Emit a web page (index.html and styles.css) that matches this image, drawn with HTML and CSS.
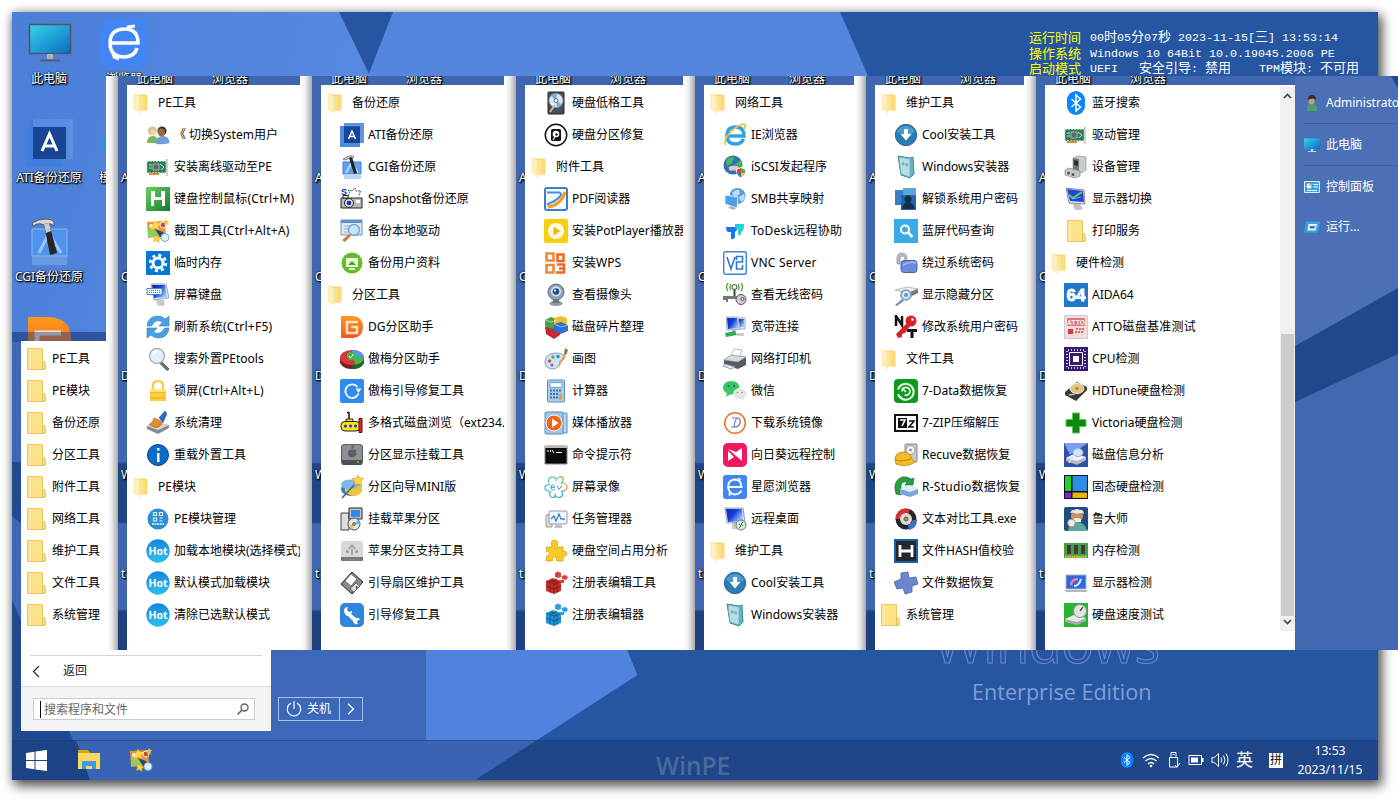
FILE: index.html
```html
<!DOCTYPE html>
<html lang="zh-CN">
<head>
<meta charset="utf-8">
<title>WinPE</title>
<link rel="stylesheet" href="styles.css">
</head>
<body>
<svg class="sprite" aria-hidden="true">
<defs>
<linearGradient id="gY" x2="1"><stop offset="0" stop-color="#ffe9a0"/><stop offset="1" stop-color="#fbd56b"/></linearGradient>
<linearGradient id="gC" x2="1" y2="1"><stop offset="0" stop-color="#35d5ea"/><stop offset="1" stop-color="#0a6cc4"/></linearGradient>
<linearGradient id="gH" y2="1" x2="0"><stop offset="0" stop-color="#1787dc"/><stop offset="1" stop-color="#2cc0ee"/></linearGradient>
<linearGradient id="gN" x2="1" y2=".6"><stop offset="0" stop-color="#1023a8"/><stop offset=".5" stop-color="#1c3fd8"/><stop offset="1" stop-color="#9cc6ff"/></linearGradient>
<linearGradient id="gO" x2="0" y2="1"><stop offset="0" stop-color="#fb9a1c"/><stop offset="1" stop-color="#f0581c"/></linearGradient>
<linearGradient id="gGr" x2="1" y2="1"><stop offset="0" stop-color="#6ccf5c"/><stop offset="1" stop-color="#157a35"/></linearGradient>
</defs>
<symbol id="folder" viewBox="0 0 24 24"><path d="M3.500 1.500H18.500V13.500l2.500 2V22.500H3.500z" fill="#fde28c" stroke="#ecca62"/><path d="M6 2v20" stroke="#fff0bc"/><path d="M18.500 22V14q2.300 1 2.500 3v5.500z" fill="#ffe9a8" stroke="#e3bc4e"/></symbol>
<symbol id="open" viewBox="0 0 16 24"><path d="M3 3.500h11v16H3z" fill="#f7d674"/><path d="M6 5h8.500v14.500H6z" fill="url(#gY)"/><path d="M1 2.500l5.500 2.500v17l-3-3L1 18.500z" fill="#fff0bb" stroke="#f5dd90" stroke-width=".5"/></symbol>
<symbol id="users" viewBox="0 0 24 24"><path d="M1 20q0-7 6-7 5 0 6 7z" fill="#79b957"/><circle cx="6.500" cy="8" r="4.500" fill="#d8c28a"/><circle cx="7.500" cy="9.500" r="3" fill="#f3d3b0"/><path d="M10 21q0-8 7-8 6 0 6.500 7-6 2-13.500 1z" fill="#6f9fdb"/><circle cx="16" cy="8" r="4.500" fill="#3a3430"/><ellipse cx="15.500" cy="9.500" rx="3.300" ry="4" fill="#9b6a48"/></symbol>
<symbol id="card" viewBox="0 0 24 24"><path d="M1 6h19v12H1z" fill="#2f7d58"/><path d="M1 6.500h19v11H1z" fill="none" stroke="#9cc9a8" stroke-dasharray="2 1"/><path d="M7 9h6v6H7z" fill="#666" stroke="#ddd" stroke-width=".6"/><path d="M14 9l4 3-3 3M3 10h3M3 13h3" stroke="#c9e3cf" fill="none"/><path d="M3 18h10v2H3z" fill="#e58a2c"/><path d="M20 4h1.500v17H20.500V7z" fill="#aaa"/></symbol>
<symbol id="hkey" viewBox="0 0 24 24"><path d="M0 0h24v24H0z" fill="url(#gGr)"/><path d="M5 4h4v6h6V4h4v15h-3v-6H8v6H5z" fill="#fff"/></symbol>
<symbol id="snip" viewBox="0 0 24 24"><path d="M1 3l18-1 1 15-18 2z" fill="#f09030"/><path d="M2 9l7 2 6 7H2z" fill="#8fce5b"/><circle cx="5" cy="7" r="2" fill="#fff2e0"/><path d="M9 1l2 3 4 0-3 3 1 4-4-2-4 2 1-4z" fill="#ffd84a"/><circle cx="17" cy="6" r="3" fill="#c94f2a" stroke="#fff"/><path d="M20 0l1 2h2.500l-2 1.700.5 2.300-2-1-2 1 .5-2.300-2-1.700H19z" fill="#f7c33c"/><path d="M9 10l8 3 3 5-6 0z" fill="#26457c"/><circle cx="19" cy="18.500" r="4" fill="#dff0ff" stroke="#79a8d8"/><path d="M11 16l1 2 3 1-2 1.500 0 3-2.500-2-3 1 1-3-1.500-2.500h3z" fill="#ffd03a" stroke="#d29a1a" stroke-width=".5"/></symbol>
<symbol id="gear" viewBox="0 0 24 24"><path d="M0 0h24v24H0z" fill="#0078d7"/><circle cx="12" cy="12" r="5" fill="none" stroke="#fff" stroke-width="3"/><circle cx="12" cy="12" r="7.800" fill="none" stroke="#fff" stroke-width="2.800" stroke-dasharray="3.100 3.030"/></symbol>
<symbol id="osk" viewBox="0 0 24 24"><path d="M5 1h15l3 14-15 2z" fill="#dfe5ea" stroke="#9aa"/><path d="M6 2h13l2 12-13 1z" fill="url(#gN)"/><path d="M10 17h8l1 5q-4 2-8 0z" fill="#c8ccd0"/><path d="M1 5.500h15v6H1z" fill="#fff" stroke="#3a8ad8"/><path d="M3 7.500h11M3 9.500h11" stroke="#3a8ad8" stroke-dasharray="1.200 .8"/></symbol>
<symbol id="refresh" viewBox="0 0 24 24"><path d="M1 11q1-10 11-10 4 0 7 3l4-3v10h-10l3.500-4q-7-4-11 4zM23 13q-1 10-11 10-4 0-7-3l-4 3v-10h10l-3.500 4q7 4 11-4z" fill="#4a9fe3" stroke="#2d7cc0" stroke-width=".6"/></symbol>
<symbol id="mag" viewBox="0 0 24 24"><path d="M16 15l7 7-2 1.500-7-7z" fill="#777" stroke="#555"/><circle cx="11" cy="9" r="7.500" fill="#e3effa" stroke="#a9b3bc" stroke-width="1.500"/><path d="M7 8q1-4 5-4" stroke="#fff" stroke-width="2" fill="none"/></symbol>
<symbol id="lock" viewBox="0 0 24 24"><path d="M7 11V7q0-5 5-5t5 5v4" fill="none" stroke="#f5cf55" stroke-width="2.500"/><path d="M4 10h16v12H4z" fill="#fbcf3e"/><path d="M4 13h16M4 19h16" stroke="#e2ab1c"/><path d="M4 10h16v3H4z" fill="#fde28a"/></symbol>
<symbol id="clean" viewBox="0 0 24 24"><path d="M1 15l9-3 13 2v3l-11 6-11-5z" fill="#8a8a8a"/><path d="M1 15l9-3 13 2-11 5z" fill="#d7d7d7"/><path d="M14 7l5-6 1 2-3 7z" fill="#2c6bc4" stroke="#2c6bc4" stroke-width="2"/><path d="M8 7l9 4q-3 6-8 5.500l-6-3q4-2 5-6.500z" fill="#e38a2f" stroke="#a6551a" stroke-width=".6"/></symbol>
<symbol id="info" viewBox="0 0 24 24"><circle cx="12" cy="12" r="10.500" fill="#0a6bc9" stroke="#0e3f7d"/><path d="M11 5h2.500v2.500H11zM11 10h2.500v9H11z" fill="#fff"/></symbol>
<symbol id="pem" viewBox="0 0 24 24"><circle cx="12" cy="12" r="10.500" fill="#2b8fd3"/><path d="M7.500 5.500h3v3h-3zM13.500 5.500h3v3h-3zM7.500 11h3v3h-3zM13.500 11h3M13.500 14h3" fill="none" stroke="#e8f4ff" stroke-width="1.200"/><path d="M6 17h12" stroke="#b8dcf5" stroke-width="2" stroke-dasharray="2 .6"/></symbol>
<symbol id="hot" viewBox="0 0 24 24"><circle cx="12" cy="12" r="11.700" fill="url(#gH)"/><text x="12" y="16" font-size="10.500" font-weight="700" font-family="Open Sans,sans-serif" text-anchor="middle" fill="#fff">Hot</text></symbol>
<symbol id="ati" viewBox="0 0 24 24"><path d="M0 3h20v21H0z" fill="#4c8de0"/><path d="M4 0h20v20H4z" fill="#3c7ad2" opacity=".8"/><path d="M4 3.500h16v16.500H4z" fill="#16469a"/><path d="M8.500 16L12 8l3.500 8M9.500 13.500h5" fill="none" stroke="#fff" stroke-width="1.500"/></symbol>
<symbol id="cgi" viewBox="0 0 24 24"><path d="M3 7h18v12H3z" fill="#5fa2ee" stroke="#3d7fd8"/><path d="M6 18l6-11 6 11" fill="none" stroke="#b8dafb" stroke-width="2"/><path d="M4 19h17v5H4z" fill="#b9d4f4"/><path d="M3 4l6-3q4-1 5 1l-2 2-2-1-5 2z" fill="#ddd" stroke="#333" stroke-width=".6"/><path d="M9 3l3-1 5 16-3 1z" fill="#222"/></symbol>
<symbol id="snap" viewBox="0 0 24 24"><text x="1" y="8" font-size="9" font-weight="700" font-family="Liberation Sans,sans-serif" fill="#1818d8">S</text><path d="M8 9l2-4-2-2 4 1 3-3 1 3 5 0-2 3 1 2" fill="#fff" stroke="#444" stroke-dasharray="2 1"/><path d="M1 11h21v10H1z" fill="#bbb" stroke="#222"/><path d="M3 8.500h5V11H3z" fill="#fff" stroke="#222"/><circle cx="9" cy="16" r="4.500" fill="#ddd" stroke="#222"/><circle cx="9" cy="16" r="2.300" fill="#1a2fae"/><path d="M16 13h4v3h-4z" fill="#fff"/></symbol>
<symbol id="bdrv" viewBox="0 0 24 24"><path d="M1 1h21v15H1z" fill="#dce9f6" stroke="#6b93c0"/><path d="M1 1h21v3H1z" fill="#5b93d2"/><path d="M4 7h6M4 10h5M4 13h4" stroke="#8fb0d6"/><path d="M9 15l2 2-6 6-3-2z" fill="#d17f3c"/><circle cx="14" cy="11" r="5.500" fill="#c8e4fb" stroke="#7aa5cf" stroke-width="1.500"/></symbol>
<symbol id="bdata" viewBox="0 0 24 24"><circle cx="12" cy="12" r="10.500" fill="#69bb2d"/><path d="M6 7h12v9H6z" fill="#e9f8da"/><path d="M8 14l4-4 4 4z" fill="#52a022"/><path d="M9 18h6" stroke="#fff" stroke-width="1.500"/></symbol>
<symbol id="dg" viewBox="0 0 24 24"><path d="M1 1h12q10 1 10 11T13 23H1z" fill="url(#gO)"/><path d="M18 7H7v11h10v-6h-6" fill="none" stroke="#ffe3c4" stroke-width="2.500"/></symbol>
<symbol id="pie" viewBox="0 0 24 24"><path d="M0 11v5q3 6 12 6t12-6v-5z" fill="#7c2020"/><path d="M12 22q9 0 12-6v-5H12z" fill="#176a28"/><ellipse cx="12" cy="10.500" rx="12" ry="7.500" fill="#d23a3c"/><path d="M12 10.500L12 3q11 0 12 7.500z" fill="#5499de"/><path d="M12 10.500H24q-1 6-8 7z" fill="#4cb950"/><circle cx="11" cy="9" r="4" fill="#49b24d"/><path d="M9 9l1.500 2 3-4" fill="none" stroke="#fff"/></symbol>
<symbol id="aofix" viewBox="0 0 24 24"><rect width="24" height="24" rx="2" fill="#2f8bee"/><path d="M17.500 8a6.800 6.800 0 1 0 1 6.500" fill="none" stroke="#fff" stroke-width="1.800"/><path d="M15.500 9.500h6L18.500 14z" fill="#fff"/></symbol>
<symbol id="sub" viewBox="0 0 24 24"><path d="M9 10V1M7 1.500h2" stroke="#111" fill="none" stroke-width="1.500"/><path d="M6 11V8h7v3" fill="#f7e417" stroke="#222"/><rect x="1" y="10.500" width="19" height="9.500" rx="4" fill="#f7e417" stroke="#222"/><path d="M19 7.500h3v14h-3z" fill="#e32222" stroke="#611"/><circle cx="5.500" cy="15" r="1.500" fill="#1b2fd0"/><circle cx="10.500" cy="15" r="1.500" fill="#1b2fd0"/><circle cx="15.500" cy="15" r="1.500" fill="#1b2fd0"/></symbol>
<symbol id="macdisk" viewBox="0 0 24 24"><rect x="1.500" y="1.500" width="21" height="20" rx="2.500" fill="#8d9094" stroke="#5c5f63"/><path d="M2 17h20v3q0 2-2 2H4q-2 0-2-2z" fill="#4d4f52"/><path d="M12 7q4-2 4 1-1 2 1 3-2 4-5 3-3 1-4-3 0-5 4-4z" fill="#5c5f63"/><path d="M12 6q0-3 2-3" stroke="#5c5f63" stroke-width="1.500"/><path d="M17 19h2" stroke="#6bd24a" stroke-width="1.500"/></symbol>
<symbol id="wiz" viewBox="0 0 24 24"><ellipse cx="11.500" cy="14" rx="10.500" ry="7" fill="#2f7fc7"/><path d="M5 12l17-2v6q-3 5-9 5-5-1-8-5z" fill="#f2c437"/><ellipse cx="10" cy="9.500" rx="9" ry="5" fill="#7fb7e8"/><path d="M2 23L17 7" stroke="#666" stroke-width="1.800"/><path d="M18 0l1.500 3 4 .5-2.500 3 .5 4-4-1.800-3.500 1.500.8-4L12 3.500h4z" fill="#ffd84a" stroke="#c99518" stroke-width=".6"/></symbol>
<symbol id="macmount" viewBox="0 0 24 24"><path d="M1 6h8v17H1z" fill="#ddd" stroke="#444"/><path d="M9 1h13v11H9z" fill="#c8c8c8" stroke="#222"/><path d="M11 3h9v7h-9z" fill="#2a8be0"/><circle cx="14" cy="17" r="6" fill="#e4e4ea" stroke="#555"/><path d="M14 17l4-4q2 2 2 4z" fill="#54c8e0"/><path d="M14 17l-5 2q2 3 4 3z" fill="#e8c84a"/><circle cx="14" cy="17" r="1.300" fill="#fff" stroke="#444"/></symbol>
<symbol id="macsup" viewBox="0 0 24 24"><rect x="1" y="2" width="22" height="18" rx="2" fill="#d6d8da"/><path d="M1 18h22v3q0 1-1 1H2q-1 0-1-1z" fill="#77797c"/><path d="M12 16V10M9 10l3-4 3 4M9 13h-2v-2M15 13h2v-2" stroke="#999" stroke-width="1.600" fill="none"/><path d="M8 21h8" stroke="#5a9be0"/></symbol>
<symbol id="floppy" viewBox="0 0 24 24"><path d="M12 1L23 11 12 23 1 13z" fill="#8b8b8b" stroke="#222"/><path d="M11 3l6 5-6 7-6-5z" fill="#fff" stroke="#444" stroke-width=".6"/><path d="M16 12l4 3-6 6-4-3z" fill="#ddd" stroke="#333" stroke-width=".6"/><path d="M16 15l2 1-2 2z" fill="#222"/></symbol>
<symbol id="wrench" viewBox="0 0 24 24"><rect width="24" height="24" rx="5" fill="#2f86dc"/><path d="M4 8a4 4 0 0 1 4-4l-1 3 2 2 3-1q0 2-1 3l5 4q3-1 4 2l-2 0-1 2 1 2q-4 1-5-3l-5-5Q5 13 4 8z" fill="#fff"/></symbol>
<symbol id="hdlow" viewBox="0 0 24 24"><rect x="4" y="1" width="16" height="22" rx="1" fill="#4b4f54" stroke="#222"/><circle cx="12" cy="9.500" r="7" fill="#dfeaf4" stroke="#8899a8"/><path d="M12 9.500L7 5q3-3 6-2zM12 9.500l6 4q-2 3-5 3z" fill="#6bb3e6"/><circle cx="12" cy="9.500" r="2" fill="#fff" stroke="#567"/><path d="M6 21l5-7" stroke="#bbb" stroke-width="2"/></symbol>
<symbol id="hdfix" viewBox="0 0 24 24"><circle cx="12" cy="12" r="10.700" fill="#fff" stroke="#111" stroke-width="1.500"/><rect x="7" y="6" width="10" height="12" rx="1.500" fill="#111"/><circle cx="12" cy="11" r="3.300" fill="#fff"/><circle cx="12.500" cy="11.500" r="1.200" fill="#111"/><path d="M9 17l2-3" stroke="#fff" stroke-width="1.200"/></symbol>
<symbol id="pdf" viewBox="0 0 24 24"><rect x="1" y="1" width="22" height="22" rx="2" fill="#f4f9ff" stroke="#3c7cc9" stroke-width="2"/><path d="M3 5.500h12q4 1 0 5-4 4-12 7" fill="none" stroke="#4b8bd0" stroke-width="2"/><path d="M4 20q13-2 17-15" fill="none" stroke="#f59a22" stroke-width="3"/></symbol>
<symbol id="pot" viewBox="0 0 24 24"><rect width="24" height="24" rx="2" fill="#f6cf0c"/><circle cx="12" cy="12" r="8" fill="#fffbe2"/><path d="M9.500 7.500v9l7-4.500z" fill="#e8b80a"/></symbol>
<symbol id="wps" viewBox="0 0 24 24"><path d="M2.500 2.500h7v7h-7zM2.500 14h7v7.500h-7z" fill="none" stroke="#f08a34" stroke-width="2.600"/><path d="M13.500 10V3.500h6V10zM13 13.500h7v8h-8M15 17.500h5" fill="none" stroke="#ef6a28" stroke-width="2.600"/></symbol>
<symbol id="cam" viewBox="0 0 24 24"><ellipse cx="12" cy="20.500" rx="6.500" ry="2.500" fill="#8c98a4"/><path d="M10 15h4l2 5H8z" fill="#6c7884"/><circle cx="12" cy="9" r="8" fill="#8fa3b8" stroke="#5c7088"/><circle cx="12" cy="8.500" r="5" fill="#d8e5f0"/><circle cx="12" cy="8.500" r="3.300" fill="#234a7c"/><circle cx="11" cy="7.500" r="1.200" fill="#bfe0ff"/></symbol>
<symbol id="defrag" viewBox="0 0 24 24"><path d="M1 12l7-3 8 4v7l-6 4-8-5z" fill="#c02a32"/><path d="M1 5l6-3 8 3v6l-7 3-7-3z" fill="#3fa74a"/><path d="M10 3l7-2 6 2v6l-6 2-7-2z" fill="#efbe35"/><path d="M10 9l7-2 7 3v6l-7 3-7-3z" fill="#2f6fd0"/><path d="M1 5l6 2 6-2M10 9l7 3 7-2" stroke="#fff" stroke-opacity=".5" fill="none"/></symbol>
<symbol id="paint" viewBox="0 0 24 24"><path d="M1 15q0-8 10-9 11 0 9 6-2 2-4 2 0 8-8 8-7-1-7-7z" fill="#cfe3f4" stroke="#7aa2c6"/><circle cx="5.500" cy="14" r="1.700" fill="#d84a3c"/><circle cx="9" cy="10" r="1.700" fill="#5bb04b"/><circle cx="14" cy="9.500" r="1.700" fill="#3f7fd0"/><circle cx="8" cy="18" r="1.500" fill="#9a57c0"/><path d="M14 20l6-13 2 1-7 12z" fill="#f29a38"/><path d="M20 7l1-6 3 2-2 5z" fill="#a5683a"/></symbol>
<symbol id="calc" viewBox="0 0 24 24"><rect x="3.500" y="1" width="17" height="22" rx="1" fill="#a9cdec" stroke="#5c8fbe"/><path d="M6 3.500h12v5H6z" fill="#f4faff" stroke="#7aa2c6"/><path d="M6 11.500h12M6 15h8M6 18.500h8" stroke="#46719c" stroke-width="2" stroke-dasharray="2 1"/><path d="M15 14.500h3v6h-3z" fill="#f2993a"/></symbol>
<symbol id="media" viewBox="0 0 24 24"><path d="M6 2h17v20H6z" fill="#b6d5ec" stroke="#5d8fb8"/><rect x="1" y="1" width="18" height="22" rx="1" fill="#9cc6e6" stroke="#5d8fb8"/><circle cx="10" cy="12" r="8" fill="#f2641c" stroke="#fff"/><path d="M8 7.500v9l6.500-4.500z" fill="#fff"/></symbol>
<symbol id="cmd" viewBox="0 0 24 24"><path d="M1 3h22v18H1z" fill="#0b0b0b" stroke="#888"/><path d="M1 3h22v2H1z" fill="#b8bcc0"/><path d="M3 8h2M6.500 7v2M8 7l2 3M12 9.500h6" stroke="#fff"/></symbol>
<symbol id="ev" viewBox="0 0 24 24"><g fill="none" stroke-width="1.200"><path d="M5 8q-2-5 3-6 5 0 4 4" stroke="#45c6a0"/><path d="M13 4q3-4 6-1 1 3-2 6" stroke="#6cc24a"/><path d="M19 8q5 2 4 5-1 3-6 3" stroke="#f29a38"/><path d="M18 16q2 6-3 6.500-4 0-4-4" stroke="#35a8dc"/><path d="M6 9q-6 1-5 5 2 3 6 2M7 17q-3 2 0 5 3 1 5-1" stroke="#45b8c8"/></g><path d="M7 12.500h3.500q0-2.500-2-2.500T7 13t4 1.500M13 10.500l2 4 3-4" fill="none" stroke="#3b9fc8"/></symbol>
<symbol id="task" viewBox="0 0 24 24"><path d="M2 8h6v12H2z" fill="#ddd" stroke="#999"/><rect x="5" y="4" width="18" height="13" rx="1" fill="#f2f6fa" stroke="#8e9aa6"/><path d="M7 12l3-3 2 5 3-7 2 5h4" fill="none" stroke="#3c86c8" stroke-width="1.300"/><path d="M12 17h5l2 4h-9z" fill="#bcc3ca"/></symbol>
<symbol id="puzzle" viewBox="0 0 24 24"><path d="M2.500 8h5.500q-2-7 2.500-7t2.500 7h6v4.500q4-1 4 2t-4 3V22h-6.500q1-4-2-4t-2 4H2.500v-5q3-1 3-3t-3-1.500z" fill="#f9c928" stroke="#d39a12" stroke-width=".7"/></symbol>
<symbol id="regr" viewBox="0 0 24 24"><path d="M2 10l7-3 8 3v10l-7 3-8-3z" fill="#c9302c"/><path d="M10 13v10M2 10l8 3 7-3M2 15l8 3 7-3M6 8.500l7 3v10M13 8.500l-7 3v10" stroke="#7a1612" fill="none" stroke-width=".8"/><path d="M11 2l3-1.500 3 1.500v4l-3 1-3-1zM18 5l3-1 2.500 1v3L21 9l-3-1zM16 9h4v3h-4z" fill="#d8423e"/></symbol>
<symbol id="regb" viewBox="0 0 24 24"><path d="M2 10l7-3 8 3v10l-7 3-8-3z" fill="#2196d8"/><path d="M10 13v10M2 10l8 3 7-3M2 15l8 3 7-3M6 8.500l7 3v10M13 8.500l-7 3v10" stroke="#0c4f80" fill="none" stroke-width=".8"/><path d="M11 2l3-1.500 3 1.500v4l-3 1-3-1zM18 5l3-1 2.500 1v3L21 9l-3-1zM16 9h4v3h-4z" fill="#2f9fe0"/></symbol>
<symbol id="ie" viewBox="0 0 24 24"><path d="M5 13h16q0-9-8.500-9T4 13q0 8 8.500 8 6 0 8-5" fill="none" stroke="#2fa3e6" stroke-width="3.500"/><path d="M3 22q-3-4 3-11Q13 3 20 1q4 0 1 5" fill="none" stroke="#f2c230" stroke-width="1.800"/></symbol>
<symbol id="iscsi" viewBox="0 0 24 24"><circle cx="10" cy="10" r="9.500" fill="#2774bd"/><path d="M3 5q5-5 8-2l-2 5-5 3zM12 9l6-4 1 8-5 3z" fill="#52b84e"/><path d="M5 12q6-4 12 0l-3 4-8 0z" fill="#c8d2dc" stroke="#667"/><path d="M13 14l5-2 5 2q0 7-5 9-5-2-5-9z" fill="#fff"/><path d="M14 14.500l4-1.500v5h-4z" fill="#e0452c"/><path d="M18 13l4 1.500v3.500h-4z" fill="#5fb440"/><path d="M14 18h4v4.500q-3-1-4-4.500z" fill="#3a78d0"/><path d="M18 18h4q-1 3-4 4.500z" fill="#f5c22e"/></symbol>
<symbol id="smb" viewBox="0 0 24 24"><circle cx="14.500" cy="9" r="8" fill="#5a9ed6"/><path d="M9 6q4-4 7-3l1 4-5 3zM16 10l5-3 1 5-4 3z" fill="#bcdcf2"/><path d="M2 8l13 2-1 11-12-4z" fill="#4aa0e4" stroke="#e4eef6"/><path d="M8 19l5 2-2 2-6-2z" fill="#aab4bc"/></symbol>
<symbol id="todesk" viewBox="0 0 24 24"><path d="M3 8h11v3l-2 2v5q0 2-4 2v-7H5q-2-1-2-5z" fill="#1677f2"/><path d="M12 5h9q0 8-3 8v2q-1 2-3 1V9h-3z" fill="#22cfd8"/></symbol>
<symbol id="vnc" viewBox="0 0 24 24"><rect x=".7" y=".7" width="22.600" height="22.600" rx="2" fill="#fff" stroke="#3c83d8" stroke-width="1.400"/><path d="M4 6l4 12 4-12M13.500 9V5.500h6V11h-6v7h6v-4" fill="none" stroke="#2f78cf" stroke-width="1.600"/></symbol>
<symbol id="wkey" viewBox="0 0 24 24"><path d="M8 1q-2 3 0 6M5 0q-3 4 0 8M15 1q2 3 0 6M18 0q3 4 0 8" fill="none" stroke="#4fa83c" stroke-width="1.300"/><circle cx="11.500" cy="4" r="2.500" fill="#fff" stroke="#444"/><path d="M11.500 6v9" stroke="#444" stroke-width="2"/><path d="M0 13h14v3H5v3H3v-2H0z" fill="#777"/><circle cx="18" cy="16.500" r="5" fill="#ccc" stroke="#555"/><circle cx="19.500" cy="16" r="1.500" fill="#fff" stroke="#555"/></symbol>
<symbol id="pcs" viewBox="0 0 24 24"><path d="M12 3h10v11H12z" fill="#dfe5ea" stroke="#a8b0b8"/><path d="M13 4h8v8h-8z" fill="url(#gN)"/><path d="M3 2h12l2 12-13 1z" fill="#e4e8ec" stroke="#a8b0b8"/><path d="M4 3h10l2 10-11 1z" fill="url(#gN)"/><path d="M9 15h4v4H9z" fill="#b8bcc0"/><path d="M2 18l10-2 2 4-11 2z" fill="#35a85a"/><path d="M14 18h7v3h-7z" fill="#c8ccd0"/></symbol>
<symbol id="printer" viewBox="0 0 24 24"><path d="M8 9l3-7 8 1-3 8z" fill="#fff" stroke="#bbb"/><path d="M1 13l7-5 15 2v8l-8 4-14-4z" fill="#555b62"/><path d="M1 13l7-5 15 2-8 5z" fill="#d8dcdf" stroke="#8a9096" stroke-width=".6"/><path d="M2 17l10 3-4 2-8-3z" fill="#e4ecf4" stroke="#99a"/></symbol>
<symbol id="wechat" viewBox="0 0 24 24"><path d="M8 2q8 0 8.500 7Q10 10 10 15.500H7L3 18l1-3.500Q0 12 0 8.500 1 2 8 2z" fill="#35c468"/><circle cx="5.500" cy="7" r="1" fill="#17783a"/><circle cx="11" cy="7" r="1" fill="#17783a"/><path d="M17 9.500q6 0 6.500 5 0 3-2.500 4.500l.5 3-3-2q-7 1-8-5 0-5 6.500-5.500z" fill="#e6e6e6"/><circle cx="14.500" cy="13.500" r=".8" fill="#888"/><circle cx="19" cy="13.500" r=".8" fill="#888"/></symbol>
<symbol id="dl" viewBox="0 0 24 24"><circle cx="12" cy="12" r="10.300" fill="#fff" stroke="#ee7434" stroke-width="1.600"/><path d="M9 7h6q-3 0-4 9H8M15 7q3 1 2 5t-6 4" fill="none" stroke="#7676b8" stroke-width="1.200"/></symbol>
<symbol id="sun" viewBox="0 0 24 24"><rect width="24" height="24" rx="5" fill="#f2185f"/><path d="M5 6l14 12V5l-6 4zM5 8v10l6-4z" fill="#fff"/></symbol>
<symbol id="star" viewBox="0 0 24 24"><rect width="24" height="24" rx="3" fill="#4285f4"/><path d="M5.500 12h13q0-7-6.500-7.500Q5 5 5 12q1 7 7 7.500 5-.5 6.500-4" fill="none" stroke="#fff" stroke-width="1.800"/><path d="M6 18l1 3M15 3l3 2" stroke="#fff" stroke-width="1.500"/></symbol>
<symbol id="rdp" viewBox="0 0 24 24"><path d="M2 1h18l2 14-18 1z" fill="#d8dee4" stroke="#9aa4ae"/><path d="M3 2h16l1 12-15 1z" fill="url(#gN)"/><path d="M9 16h7l2 6H9z" fill="#c4c9ce"/><circle cx="18" cy="18" r="5" fill="#dce6dc" stroke="#777"/><path d="M16 17l2 2-2 2M20 15l-2 2 2 2" fill="none" stroke="#268a3c"/></symbol>
<symbol id="cool" viewBox="0 0 24 24"><circle cx="12" cy="12" r="10.700" fill="#2a7cb5" stroke="#2a6593"/><path d="M3 9a9.500 9 0 0 1 18 0q-9 5-18 0z" fill="#65afd8" opacity=".6"/><path d="M10 6h4v5h3.500L12 17.500 6.500 11H10z" fill="#fff"/></symbol>
<symbol id="wininst" viewBox="0 0 24 24"><path d="M4 1l12 2 3-1 1 17-4 4-9-3z" fill="#63b5c6" stroke="#3d8aa0"/><path d="M5 2l11 2v18L7 19z" fill="#b8dce4" stroke="#6ea8b6" stroke-width=".7"/><path d="M8 7l2.500.5v3L8 10zM11.500 8l2.500.7v3l-2.500-.7z" fill="#6fb4c4"/></symbol>
<symbol id="unlock" viewBox="0 0 24 24"><path d="M1 3h13v15H1z" fill="#397fc4"/><path d="M9 1h13v14H9z" fill="#5ba4dc"/><path d="M7 8h15v15H7z" fill="#2365aa"/><circle cx="14" cy="12" r="3.500" fill="#132f4c"/><path d="M8 22q1-7 6-7t7 7z" fill="#132f4c"/></symbol>
<symbol id="bsod" viewBox="0 0 24 24"><path d="M0 0h24v24H0z" fill="#3baae8"/><circle cx="11" cy="10.500" r="4" fill="none" stroke="#fff" stroke-width="2"/><path d="M14 13.500l4.500 4.500" stroke="#fff" stroke-width="2.500"/></symbol>
<symbol id="bypass" viewBox="0 0 24 24"><path d="M3 13V7q0-5 5-5t5 6l-2 1Q11 5 8.500 5T6 8v5z" fill="#b4bac4" stroke="#8890a0" stroke-width=".7"/><rect x="7" y="9.500" width="16" height="12" rx="3" fill="#6d8ada" stroke="#4a62a8"/><path d="M9 14q7-4 13-2" stroke="#a8bcf0" stroke-width="1.500" fill="none"/></symbol>
<symbol id="hidden" viewBox="0 0 24 24"><path d="M1 7l12-3 11 2-10 4z" fill="#eee" stroke="#bbb"/><path d="M14 10l10-4v4l-8 4z" fill="#777"/><path d="M8 16l2 2-7 5-2-1z" fill="#8290a0"/><circle cx="12" cy="12" r="5" fill="#cfe4f8" stroke="#7c9cbc" stroke-width="1.500"/><circle cx="12" cy="12" r="2" fill="#5a94d0"/></symbol>
<symbol id="nt" viewBox="0 0 24 24"><path d="M2 11V1l6 9V1" fill="none" stroke="#111" stroke-width="2.500"/><path d="M13 15.500h10M18 15v8" stroke="#111" stroke-width="3"/><circle cx="17" cy="6" r="5.500" fill="#d8222a"/><path d="M13 8L2 19l2 4 4-1 0-3 3-1 5-7z" fill="#d8222a"/><circle cx="18.500" cy="4.500" r="1.300" fill="#fff"/></symbol>
<symbol id="d7" viewBox="0 0 24 24"><rect width="24" height="24" rx="4" fill="#0d9a1c"/><path d="M4 10.500a8 8 0 1 1 0 4.500M5 17l3 2" fill="none" stroke="#e3f8e3" stroke-width="2"/><path d="M8 12.500a4 4 0 1 1 2.500 3.500M12 13l-4-4" fill="none" stroke="#e3f8e3" stroke-width="1.700"/></symbol>
<symbol id="z7" viewBox="0 0 24 24"><path d="M1 4h22v16H1z" fill="#fff" stroke="#111" stroke-width="2"/><path d="M4 7h9v10H4z" fill="#111"/><path d="M6 9h5l-3 6" fill="none" stroke="#fff" stroke-width="1.600"/><path d="M15 10h5l-5 6h5" fill="none" stroke="#111" stroke-width="1.600"/></symbol>
<symbol id="recuva" viewBox="0 0 24 24"><rect x="11" y="1" width="12" height="18" rx="1" fill="#c8c8cc" stroke="#888"/><circle cx="16.500" cy="7" r="4.500" fill="#f2f2f2" stroke="#999"/><circle cx="16.500" cy="7" r="1.300" fill="#888"/><path d="M1 17q0-8 8-8 7 0 9 7l3 3q-8 6-19 2z" fill="#f3ba2a" stroke="#c08612" stroke-width=".8"/><path d="M1 17q6 2 16-1" stroke="#c08612" fill="none"/></symbol>
<symbol id="rst" viewBox="0 0 24 24"><path d="M2 19Q-2 6 8 2q5-1 9 2l3-1-1 7-8 0 2-3Q8 6 7 11v9z" fill="#26a03c" stroke="#14692a" stroke-width=".6"/><path d="M6 14l9-4 9 4v5l-8 3-10-3z" fill="#7aa6d8"/><path d="M6 14l9-4 9 4-8 3z" fill="#e0ecf8"/></symbol>
<symbol id="cmp" viewBox="0 0 24 24"><circle cx="12" cy="12" r="10.500" fill="#262626"/><path d="M1.500 12Q2 2 12 1.500l4 1-2 5Q7 6 6 12z" fill="#d33430"/><path d="M14 18q4-2 5-5h4q0 8-8 10z" fill="#3b74c8"/><circle cx="12" cy="12" r="6" fill="#d8d8d8"/><circle cx="12" cy="12" r="2" fill="#d88a3a" stroke="#555"/></symbol>
<symbol id="hash" viewBox="0 0 24 24"><path d="M1 1h22v22H1z" fill="#24272c" stroke="#1661a8" stroke-width="2"/><path d="M6 6v12M18 6v12M6 12h12" stroke="#fff" stroke-width="2.800"/></symbol>
<symbol id="plusb" viewBox="0 0 24 24"><path d="M7 2l7-1 1 6 7-1 2 7-6 2 0 6-7 2-2-6-6 1-3-7 7-3z" fill="#6b86cc" stroke="#4a62a8" stroke-width=".8"/></symbol>
<symbol id="bt" viewBox="0 0 24 24"><rect x="3" y="0" width="18" height="24" rx="9" fill="#0a84ff"/><path d="M7.500 8l9 8-4.500 4V4l4.500 4-9 8" fill="none" stroke="#fff" stroke-width="1.500"/></symbol>
<symbol id="dev" viewBox="0 0 24 24"><path d="M9 3l5-2 8 1v13l-5 3-8-3z" fill="#c9ccce" stroke="#888" stroke-width=".6"/><path d="M9 3l6 1v12l-6-2z" fill="#777"/><path d="M10 5l4 1v5l-4-1z" fill="#1d3a28"/><path d="M1 15l4-2 11 3v5l-5 2-10-3z" fill="#c4c8cc" stroke="#777" stroke-width=".6"/><circle cx="4.500" cy="18" r="1.500" fill="#555"/><circle cx="9" cy="19.500" r="1.500" fill="#555"/></symbol>
<symbol id="disp" viewBox="0 0 24 24"><path d="M2 1l18 2 1 14-16-1z" fill="#dde2e6" stroke="#889"/><path d="M3 2l16 2 1 11-14-1z" fill="#2344d4"/><path d="M5 8l4 3 9-6" fill="none" stroke="#5fd05a" stroke-width="2"/><path d="M8 12l9-2" stroke="#58b8f0"/><path d="M9 17h7l3 5q-5 2-9 0z" fill="#bcc2c8"/></symbol>
<symbol id="a64" viewBox="0 0 24 24"><path d="M0 0h24v24H0z" fill="#1f78cc"/><text x="12" y="18" font-size="17" font-weight="700" font-family="Liberation Sans,sans-serif" text-anchor="middle" fill="#fff" stroke="#fff" stroke-width=".8">64</text></symbol>
<symbol id="atto" viewBox="0 0 24 24"><path d="M.5.5h23v23H.5z" fill="#f3dede" stroke="#ccc"/><path d="M3 3h18v8H3z" fill="#d9777a"/><text x="12" y="9.500" font-size="6.500" font-weight="700" font-family="Liberation Sans,sans-serif" text-anchor="middle" fill="#fff">ATTO</text><path d="M4 14h5v5H4z" fill="#d63a3e"/><path d="M12 14h8M11 17h9" stroke="#d63a3e" stroke-width="1.500" stroke-dasharray="2 1"/></symbol>
<symbol id="cpu" viewBox="0 0 24 24"><path d="M0 0h24v24H0z" fill="#371a72"/><path d="M5.500 5.500h13v13h-13z" fill="none" stroke="#fff"/><path d="M3 4v16M21 4v16M4 3h16M4 21h16" stroke="#fff" stroke-width="1.500" stroke-dasharray="1 2"/><path d="M9 9h6v6H9z" fill="#fff"/></symbol>
<symbol id="hdt" viewBox="0 0 24 24"><path d="M1 13L13 3l10 5v3L12 22 1 16z" fill="#3b3b3b"/><ellipse cx="13" cy="9.500" rx="7" ry="5" fill="#e8c27c" stroke="#fff2d0"/><ellipse cx="13" cy="9.500" rx="1.800" ry="1.300" fill="#888"/><path d="M5 16l6-1" stroke="#bbb" stroke-width="1.500"/></symbol>
<symbol id="cross" viewBox="0 0 24 24"><path d="M8.500 2h7v6.500H22v7h-6.500V22h-7v-6.500H2v-7h6.500z" fill="#0d8a0d" stroke="#64c264"/></symbol>
<symbol id="cdi" viewBox="0 0 24 24"><path d="M0 0h24v24H0z" fill="#2f51a8"/><path d="M0 0h24L6 12z" fill="#7d9cf0"/><path d="M2 15l8-4 12 3v3l-9 5-11-4z" fill="#b4b8c4"/><path d="M2 15l8-4 12 3-9 4z" fill="#f0f2f8"/><ellipse cx="14" cy="9.500" rx="5" ry="4" fill="#cfe6f8" stroke="#9ab8d8"/><path d="M9 13l-4 7" stroke="#dde" stroke-width="1.500"/></symbol>
<symbol id="ssd" viewBox="0 0 24 24"><path d="M0 0h24v24H0z" fill="#111"/><path d="M1 1h6v15H1z" fill="#1bd32a"/><path d="M8.500 1H23v15H8.500z" fill="#2a8fe8"/><path d="M1 17.500h6V23H1z" fill="#8a1fd0"/><path d="M8.500 17.500H23V23H8.500z" fill="#e5b312"/></symbol>
<symbol id="lu" viewBox="0 0 24 24"><rect width="24" height="24" rx="2" fill="#214c80"/><path d="M4 24q1-9 9-9t10 9z" fill="#5aa89c"/><circle cx="13" cy="9" r="6" fill="#c98f6a"/><path d="M6 6q2-4 4-3 3-2 6 0 3-1 4 4-4-2-7 0-3-2-7-1z" fill="#e8e8e8"/><path d="M9 12q4-2 8 0v3H9z" fill="#f2f2f2"/><circle cx="7.500" cy="16" r="3.800" fill="#dff0fb" stroke="#b8925a"/></symbol>
<symbol id="ram" viewBox="0 0 24 24"><path d="M0 4h24v15H0z" fill="#4a9f45"/><path d="M3 6h4v9H3zM10 6h4v9h-4zM17 6h4v9h-4z" fill="#3a3f3c"/><path d="M1 18h22" stroke="#c9c44c" stroke-width="2.500" stroke-dasharray="1.500 .7"/></symbol>
<symbol id="lap" viewBox="0 0 24 24"><path d="M2 4h20v14H2z" fill="#2c68e0" stroke="#a8b4c4"/><path d="M7 14q1-6 7-6" stroke="#ff7a9a" stroke-width="2.500" fill="none"/><path d="M10 15q5 0 7-7" stroke="#d8ecff" stroke-width="2" fill="none"/><path d="M0 19h24l-2 2H2z" fill="#b0b8c0"/></symbol>
<symbol id="spd" viewBox="0 0 24 24"><path d="M0 0h24v24H0z" fill="#2bb52f"/><path d="M1 16l9-4 12 3v3l-9 4-12-3z" fill="#a8aeb0"/><path d="M1 16l9-4 12 3-9 4z" fill="#e8eaea"/><circle cx="16" cy="8" r="6.500" fill="#dfe6e2" stroke="#8a948e"/><path d="M16 8l3-4" stroke="#333" stroke-width="1.200"/></symbol>
<symbol id="pc" viewBox="0 0 24 24"><path d="M0 2h24v16H0z" fill="url(#gC)"/><path d="M10 18h4v3h-4zM6 21h12v1.500H6z" fill="#b8d4ea"/></symbol>
</svg>

<main class="page">
  <section class="desktop">
    <svg class="wallpaper" viewBox="12 12 1366 768" preserveAspectRatio="none">
      <defs><linearGradient id="wl" x2="1" y2=".3"><stop offset="0" stop-color="#4b7fd8"/><stop offset="1" stop-color="#5a8be2"/></linearGradient></defs>
      <path d="M12 12H1378V780H12z" fill="#2656a2"/>
      <path d="M12 12H339L370 76 420 480 12 480z" fill="url(#wl)"/>
      <path d="M393 12H840L868 76H368z" fill="#5586de"/>
      <path d="M12 332H426V740H12z" fill="#5586de"/>
      <path d="M426 640H623L637.500 675 537 740H426z" fill="#5083de"/>
      <path d="M12 462h12v64l-12-10zM12 600L69 731 90 780H12z" fill="#22519e"/>
      <path d="M76 740H537L475 780H90z" fill="#568af0"/>
      <path d="M12 332H426V740H12z" fill="#1d3f86" opacity=".42"/>
      <path d="M12 740H1378V780H12z" fill="#163468" opacity=".45"/>
      <path d="M12 740.500H1378" stroke="#1c3f7d" opacity=".6"/>
    </svg>
    <div class="brand"><span class="brand-name">Windows</span><span class="brand-ed">Enterprise Edition</span></div>
    <dl class="sysinfo">
      <div><dt>运行时间</dt><dd>00<b>时</b>05<b>分</b>07<b>秒</b> 2023-11-15[<b>三</b>] 13:53:14</dd></div>
      <div><dt>操作系统</dt><dd>Windows 10 64Bit 10.0.19045.2006 PE</dd></div>
      <div><dt>启动模式</dt><dd>UEFI   <b>安全引导</b>: <b>禁用</b>    TPM<b>模块</b>: <b>不可用</b></dd></div>
    </dl>
    <div class="shortcuts">
      <div class="shortcut"><svg width="48" height="48" viewBox="0 0 48 48"><path d="M4.500 4.500h41v29h-41z" fill="url(#gC)" stroke="#50565c" stroke-width="1.500"/><path d="M22 34h6v5h-6z" fill="#aeb4ba"/><path d="M15 39.500h20v2H15z" fill="#555c64"/></svg><span>此电脑</span></div>
      <div class="shortcut"><svg width="48" height="48" viewBox="0 0 48 48"><path d="M4 8V0h40v40h-8v8H0V8z" fill="#3978d8" opacity=".45"/><path d="M0 8h41v40H0z" fill="#3d82e0" opacity=".5"/><path d="M8 0v8h33v32h7V0z" fill="#75a8f0" opacity=".4"/><path d="M8 8h33v32H8z" fill="#194494"/><path d="M17 32l7.500-17L32 32M19.500 27h10" fill="none" stroke="#fff" stroke-width="3"/></svg><span>ATI备份还原</span></div>
      <div class="shortcut"><svg width="48" height="48" viewBox="0 0 48 48"><path d="M7 11h35v27H7z" fill="#4f93ec" stroke="#86b8f5"/><path d="M14 35l10-20 12 20" fill="none" stroke="#9cc8fa" stroke-width="3"/><path d="M7 38h35v9H7z" fill="#8db8f0" opacity=".45"/><path d="M7 5q7-4 13-4 7 0 9 3v4q-3-3-6-2l-4 1q-5-3-11 1z" fill="#d8d8d8" stroke="#555"/><path d="M19 6l5-1 8 30-7 2z" fill="#252628"/><path d="M19 6l5-1 2 8-5 2z" fill="#ccc"/></svg><span>CGI备份还原</span></div>
      <div class="shortcut"><svg width="48" height="48" viewBox="0 0 48 48"><path d="M3 0h22q21 2 21 22v26H3z" fill="url(#gO)"/><path d="M36 16H12v24h22" fill="none" stroke="#f5dfc8" stroke-width="5"/></svg></div>
    </div>
    <div class="browser"><svg width="48" height="48" viewBox="0 0 48 48"><rect width="48" height="48" rx="10" fill="#4285f4"/><path d="M9 24H38Q38 10 25 10 10 10 10 24T25 38Q35 37 37 29" fill="none" stroke="#fff" stroke-width="3.500"/><path d="M27 8l8-1M13 34l1 4 5 2" fill="none" stroke="#fff" stroke-width="3"/></svg><span>浏览器</span></div>
    <div class="peek"><i></i><span>模块</span></div>
    <div class="dim"></div>
    <footer class="taskbar">
      <svg width="21" height="21" viewBox="0 0 21 21"><path d="M0 3l8.500-1.200V10H0zM9.500 1.600L21 0v10H9.500zM0 11h8.500v8.200L0 18zM9.500 11H21v10L9.500 19.400z" fill="#fff"/></svg>
      <svg class="tb-files" width="22" height="20" viewBox="0 0 22 20"><path d="M0 0h10l2 3H0z" fill="#d9a21b"/><path d="M0 3h22v16H0z" fill="#ffd859"/><path d="M4 11h14v8h-4v-3H8v3H4z" fill="#3b9be8"/></svg>
      <svg width="24" height="24"><use href="#snip"/></svg>
      <span class="winpe">WinPE</span>
      <div class="tray">
        <svg width="16" height="16"><use href="#bt"/></svg>
        <svg width="18" height="16" viewBox="0 0 18 16" fill="none" stroke="#fff" stroke-width="1.300"><path d="M1 6q8-7 16 0M3.500 9q5.500-5 11 0M6 12q3-3 6 0"/><circle cx="9" cy="14" r="1.300" fill="#fff" stroke="none"/></svg>
        <svg width="14" height="18" viewBox="0 0 14 18" fill="none" stroke="#fff"><path d="M4 6V1.500h5V6M2.500 6.500h8V16h-8zM5.500 3.500h2M8 14l2 2 3-4" /></svg>
        <svg width="16" height="12" viewBox="0 0 16 12"><path d="M1 1.500h12.500v9H1z" fill="none" stroke="#fff"/><path d="M3 3.500h7v5H3z" fill="#fff"/><path d="M14 4h1.500v4H14z" fill="#fff"/></svg>
        <svg width="18" height="16" viewBox="0 0 18 16" fill="none" stroke="#fff"><path d="M1 5.500h2.500l4-4v13l-4-4H1zM10 5.500q1.500 2.500 0 5M12.500 3.500q3 4.500 0 9M15 1.500q4 6.500 0 13"/></svg>
        <span class="lang">英</span><span class="ime">拼</span>
        <time>13:53<br>2023/11/15</time>
      </div>
    </footer>
  </section>

  <aside class="start">
    <ul class="list main-list">
      <li><svg><use href="#folder"/></svg>PE工具</li>
      <li><svg><use href="#folder"/></svg>PE模块</li>
      <li><svg><use href="#folder"/></svg>备份还原</li>
      <li><svg><use href="#folder"/></svg>分区工具</li>
      <li><svg><use href="#folder"/></svg>附件工具</li>
      <li><svg><use href="#folder"/></svg>网络工具</li>
      <li><svg><use href="#folder"/></svg>维护工具</li>
      <li><svg><use href="#folder"/></svg>文件工具</li>
      <li><svg><use href="#folder"/></svg>系统管理</li>
    </ul>
    <div class="back"><svg width="8" height="13" viewBox="0 0 8 13"><path d="M7 1L1.500 6.500 7 12" fill="none" stroke="#333" stroke-width="1.300"/></svg>返回</div>
    <div class="search"><div class="field"><span>搜索程序和文件</span><svg width="12" height="12" viewBox="0 0 12 12"><circle cx="7.500" cy="4.500" r="3.500" fill="none" stroke="#666" stroke-width="1.400"/><path d="M5 7L.7 11.300" stroke="#666" stroke-width="1.700"/></svg></div></div>
  </aside>
  <div class="power"><span><svg width="16" height="16" viewBox="0 0 16 16" fill="none" stroke="#e8f0fb" stroke-width="1.300"><path d="M5 2.200a6.700 6.700 0 1 0 6 0M8 0v8"/></svg>关机</span><span class="more"><svg width="8" height="12" viewBox="0 0 8 12"><path d="M1 .7L6.500 6 1 11.300" fill="none" stroke="#fff" stroke-width="1.300"/></svg></span></div>

  <section class="strips">
    <div class="gutter"></div>
    <div class="slice s1"><div class="ghost"><p>此电脑</p><p>浏览器</p></div><div class="letters"><i>A</i><i>C</i><i>D</i><i>W</i><i>t</i></div>
      <ul class="list">
        <li class="head"><svg><use href="#open"/></svg>PE工具</li>
        <li><svg><use href="#users"/></svg><span class="lead">《 切换System用户</span></li>
        <li><svg><use href="#card"/></svg>安装离线驱动至PE</li>
        <li class="keys"><svg><use href="#hkey"/></svg>键盘控制鼠标(Ctrl+M)</li>
        <li class="keys"><svg><use href="#snip"/></svg>截图工具(Ctrl+Alt+A)</li>
        <li><svg><use href="#gear"/></svg>临时内存</li>
        <li><svg><use href="#osk"/></svg>屏幕键盘</li>
        <li class="keys"><svg><use href="#refresh"/></svg>刷新系统(Ctrl+F5)</li>
        <li><svg><use href="#mag"/></svg>搜索外置PEtools</li>
        <li class="keys"><svg><use href="#lock"/></svg>锁屏(Ctrl+Alt+L)</li>
        <li><svg><use href="#clean"/></svg>系统清理</li>
        <li><svg><use href="#info"/></svg>重载外置工具</li>
        <li class="head"><svg><use href="#open"/></svg>PE模块</li>
        <li><svg><use href="#pem"/></svg>PE模块管理</li>
        <li><svg><use href="#hot"/></svg>加载本地模块(选择模式)</li>
        <li><svg><use href="#hot"/></svg>默认模式加载模块</li>
        <li><svg><use href="#hot"/></svg>清除已选默认模式</li>
      </ul></div>
    <div class="gutter"></div>
    <div class="slice s2"><div class="ghost"><p>此电脑</p><p>浏览器</p></div><div class="letters"><i>A</i><i>C</i><i>D</i><i>W</i><i>t</i></div>
      <ul class="list">
        <li class="head"><svg><use href="#open"/></svg>备份还原</li>
        <li><svg><use href="#ati"/></svg>ATI备份还原</li>
        <li><svg><use href="#cgi"/></svg>CGI备份还原</li>
        <li><svg><use href="#snap"/></svg>Snapshot备份还原</li>
        <li><svg><use href="#bdrv"/></svg>备份本地驱动</li>
        <li><svg><use href="#bdata"/></svg>备份用户资料</li>
        <li class="head"><svg><use href="#open"/></svg>分区工具</li>
        <li><svg><use href="#dg"/></svg>DG分区助手</li>
        <li><svg><use href="#pie"/></svg>傲梅分区助手</li>
        <li><svg><use href="#aofix"/></svg>傲梅引导修复工具</li>
        <li><svg><use href="#sub"/></svg>多格式磁盘浏览（ext234.</li>
        <li><svg><use href="#macdisk"/></svg>分区显示挂载工具</li>
        <li><svg><use href="#wiz"/></svg>分区向导MINI版</li>
        <li><svg><use href="#macmount"/></svg>挂载苹果分区</li>
        <li><svg><use href="#macsup"/></svg>苹果分区支持工具</li>
        <li><svg><use href="#floppy"/></svg>引导扇区维护工具</li>
        <li><svg><use href="#wrench"/></svg>引导修复工具</li>
      </ul></div>
    <div class="gutter"></div>
    <div class="slice s3"><div class="ghost"><p>此电脑</p><p>浏览器</p></div><div class="letters"><i>A</i><i>C</i><i>D</i><i>W</i><i>t</i></div>
      <ul class="list">
        <li><svg><use href="#hdlow"/></svg>硬盘低格工具</li>
        <li><svg><use href="#hdfix"/></svg>硬盘分区修复</li>
        <li class="head"><svg><use href="#open"/></svg>附件工具</li>
        <li><svg><use href="#pdf"/></svg>PDF阅读器</li>
        <li><svg><use href="#pot"/></svg>安装PotPlayer播放器</li>
        <li><svg><use href="#wps"/></svg>安装WPS</li>
        <li><svg><use href="#cam"/></svg>查看摄像头</li>
        <li><svg><use href="#defrag"/></svg>磁盘碎片整理</li>
        <li><svg><use href="#paint"/></svg>画图</li>
        <li><svg><use href="#calc"/></svg>计算器</li>
        <li><svg><use href="#media"/></svg>媒体播放器</li>
        <li><svg><use href="#cmd"/></svg>命令提示符</li>
        <li><svg><use href="#ev"/></svg>屏幕录像</li>
        <li><svg><use href="#task"/></svg>任务管理器</li>
        <li><svg><use href="#puzzle"/></svg>硬盘空间占用分析</li>
        <li><svg><use href="#regr"/></svg>注册表编辑工具</li>
        <li><svg><use href="#regb"/></svg>注册表编辑器</li>
      </ul></div>
    <div class="gutter"></div>
    <div class="slice s4"><div class="ghost"><p>此电脑</p><p>浏览器</p></div><div class="letters"><i>A</i><i>C</i><i>D</i><i>W</i><i>t</i></div>
      <ul class="list">
        <li class="head"><svg><use href="#open"/></svg>网络工具</li>
        <li><svg><use href="#ie"/></svg>IE浏览器</li>
        <li><svg><use href="#iscsi"/></svg>iSCSI发起程序</li>
        <li><svg><use href="#smb"/></svg>SMB共享映射</li>
        <li class="keys"><svg><use href="#todesk"/></svg>ToDesk远程协助</li>
        <li class="keys"><svg><use href="#vnc"/></svg>VNC Server</li>
        <li><svg><use href="#wkey"/></svg>查看无线密码</li>
        <li><svg><use href="#pcs"/></svg>宽带连接</li>
        <li><svg><use href="#printer"/></svg>网络打印机</li>
        <li><svg><use href="#wechat"/></svg>微信</li>
        <li><svg><use href="#dl"/></svg>下载系统镜像</li>
        <li><svg><use href="#sun"/></svg>向日葵远程控制</li>
        <li><svg><use href="#star"/></svg>星愿浏览器</li>
        <li><svg><use href="#rdp"/></svg>远程桌面</li>
        <li class="head"><svg><use href="#open"/></svg>维护工具</li>
        <li><svg><use href="#cool"/></svg>Cool安装工具</li>
        <li><svg><use href="#wininst"/></svg>Windows安装器</li>
      </ul></div>
    <div class="gutter"></div>
    <div class="slice s5"><div class="ghost"><p>此电脑</p><p>浏览器</p></div><div class="letters"><i>A</i><i>C</i><i>D</i><i>W</i><i>t</i></div>
      <ul class="list">
        <li class="head"><svg><use href="#open"/></svg>维护工具</li>
        <li><svg><use href="#cool"/></svg>Cool安装工具</li>
        <li><svg><use href="#wininst"/></svg>Windows安装器</li>
        <li><svg><use href="#unlock"/></svg>解锁系统用户密码</li>
        <li><svg><use href="#bsod"/></svg>蓝屏代码查询</li>
        <li><svg><use href="#bypass"/></svg>绕过系统密码</li>
        <li><svg><use href="#hidden"/></svg>显示隐藏分区</li>
        <li><svg><use href="#nt"/></svg>修改系统用户密码</li>
        <li class="head"><svg><use href="#open"/></svg>文件工具</li>
        <li><svg><use href="#d7"/></svg>7-Data数据恢复</li>
        <li><svg><use href="#z7"/></svg>7-ZIP压缩解压</li>
        <li><svg><use href="#recuva"/></svg>Recuve数据恢复</li>
        <li class="keys"><svg><use href="#rst"/></svg>R-Studio数据恢复</li>
        <li><svg><use href="#cmp"/></svg>文本对比工具.exe</li>
        <li><svg><use href="#hash"/></svg>文件HASH值校验</li>
        <li><svg><use href="#plusb"/></svg>文件数据恢复</li>
        <li class="closed"><svg><use href="#folder"/></svg>系统管理</li>
      </ul></div>
    <div class="gutter"></div>
    <div class="slice s6"><div class="ghost"><p>此电脑</p><p>浏览器</p></div><div class="letters"><i>A</i><i>C</i><i>D</i><i>W</i><i>t</i></div>
      <ul class="list">
        <li><svg><use href="#bt"/></svg>蓝牙搜索</li>
        <li><svg><use href="#card"/></svg>驱动管理</li>
        <li><svg><use href="#dev"/></svg>设备管理</li>
        <li><svg><use href="#disp"/></svg>显示器切换</li>
        <li><svg><use href="#folder"/></svg>打印服务</li>
        <li class="head"><svg><use href="#open"/></svg>硬件检测</li>
        <li><svg><use href="#a64"/></svg>AIDA64</li>
        <li class="keys"><svg><use href="#atto"/></svg>ATTO磁盘基准测试</li>
        <li><svg><use href="#cpu"/></svg>CPU检测</li>
        <li><svg><use href="#hdt"/></svg>HDTune硬盘检测</li>
        <li><svg><use href="#cross"/></svg>Victoria硬盘检测</li>
        <li><svg><use href="#cdi"/></svg>磁盘信息分析</li>
        <li><svg><use href="#ssd"/></svg>固态硬盘检测</li>
        <li><svg><use href="#lu"/></svg>鲁大师</li>
        <li><svg><use href="#ram"/></svg>内存检测</li>
        <li><svg><use href="#lap"/></svg>显示器检测</li>
        <li><svg><use href="#spd"/></svg>硬盘速度测试</li>
      </ul>
      <div class="scroll"><svg width="9" height="6" viewBox="0 0 9 6"><path d="M1 5l3.500-3.500L8 5" fill="none" stroke="#444" stroke-width="1.700"/></svg><div class="thumb"></div><svg width="9" height="6" viewBox="0 0 9 6"><path d="M1 1l3.500 3.500L8 1" fill="none" stroke="#444" stroke-width="1.700"/></svg></div>
    </div>
    <nav class="places">
      <svg class="places-bg" viewBox="0 0 103 574"><path d="M0 0h103v574H0z" fill="#4268b0"/><path d="M0 0h96l7 12v202L0 270z" fill="#4b70b6"/><path d="M0 270L103 212v66L0 326z" fill="#20488c"/><path d="M96 0h7v12z" fill="#20488c"/></svg>
      <a><svg viewBox="0 0 16 16"><path d="M3 16q-1-7 5-7 6 0 5 7z" fill="#4aa06a"/><ellipse cx="7.500" cy="5.500" rx="3" ry="4" fill="#c79a72"/><path d="M4 5q0-5 4-5t4 5q-3-3-8 0z" fill="#3a2c24"/></svg>Administrator</a>
      <a><svg><use href="#pc"/></svg>此电脑</a>
      <a><svg viewBox="0 0 16 16"><path d="M.5 2.500h15v11H.5z" fill="#39a3e2" stroke="#dff2ff"/><circle cx="5" cy="7" r="2.500" fill="#fff"/><path d="M5 7V4.500A2.500 2.500 0 0 1 7.500 7z" fill="#f5b82e"/><path d="M9.500 5.500H14M9.500 8H14M3 11.500h10" stroke="#fff"/></svg>控制面板</a>
      <a><svg viewBox="0 0 16 16"><path d="M2 2.500h14l-2 11H0z" fill="#3aa0e4"/><path d="M4.500 5h8.500l-1.500 6.500H3.500z" fill="#e8f6ff"/><path d="M6 7h5l-.5 2.500H5.500z" fill="#2a7cc4"/></svg>运行...</a>
    </nav>
  </section>
</main>
</body>
</html>
```

FILE: styles.css
```css
* { box-sizing: border-box; }
body {
  margin: 0;
  background: #fff;
  font: 12px/32px "Noto Sans", "Noto Sans CJK SC", sans-serif;
  color: #000;
}
ul, dl, dd, p { margin: 0; padding: 0; list-style: none; }
i { font-style: normal; }
svg { flex: none; display: block; }
.sprite { position: absolute; width: 0; height: 0; }
.page { position: relative; width: 1398px; height: 800px; overflow: hidden; }

/* Desktop */
.desktop {
  position: absolute;
  left: 12px;
  top: 12px;
  width: 1366px;
  height: 768px;
  overflow: visible;
  box-shadow: 3px 5px 11px 1px rgba(0, 0, 0, .65), 0 0 9px rgba(0, 0, 0, .2);
}
.wallpaper { position: absolute; inset: 0; width: 100%; height: 100%; }
.brand {
  position: absolute;
  left: 922px;
  top: 594px;
  display: flex;
  flex-direction: column;
  font-family: "Open Sans", sans-serif;
}
.brand-name {
  font-size: 54px;
  line-height: 72px;
  letter-spacing: -.6px;
  color: transparent;
  -webkit-text-stroke: 1px #6d8ec6;
  white-space: nowrap;
}
.brand-ed { margin-left: 38px; font-size: 21.600px; line-height: 28px; color: #7f9fd3; white-space: nowrap; }
.sysinfo {
  position: absolute;
  left: 1017px;
  top: 19px;
  font: 11.670px/15.500px "Liberation Mono", "Noto Sans CJK SC", monospace;
  color: #fff;
}
.sysinfo div { display: flex; align-items: center; height: 15.500px; white-space: pre; }
.sysinfo dt { width: 61px; font-size: 13px; color: #ff0; }
.sysinfo b { font-size: 13px; font-weight: 400; line-height: 1; }
.shortcuts { position: absolute; left: 0; top: 8px; width: 94px; height: 321px; overflow: hidden; }
.shortcut {
  display: flex;
  flex-direction: column;
  align-items: center;
  width: 74px;
  height: 99px;
}
.shortcut span, .browser span, .peek span, .ghost p, .letters i {
  color: #fff;
  line-height: 16px;
  white-space: nowrap;
  text-shadow: 1px 1px 1px #000, 0 0 2px #000, 1px 1px 2px #000;
}
.shortcut span { margin-top: 3px; }
.browser { position: absolute; left: 88px; top: 7px; display: flex; flex-direction: column; align-items: center; }
.browser span { margin-top: 4px; }
.peek { position: absolute; left: 87px; top: 115px; width: 7px; height: 60px; overflow: hidden; }
.peek i { display: block; width: 40px; height: 32px; margin-left: 4px; border-radius: 50%; background: #1c9be0; }
.peek span { display: block; margin-top: 11px; }
.dim { position: absolute; left: 0; top: 320px; width: 94px; height: 10px; background: rgba(29, 63, 134, .45); }

/* Taskbar */
.taskbar {
  position: absolute;
  left: 0;
  right: 0;
  bottom: 0;
  height: 40px;
  padding: 0 14px;
  display: flex;
  align-items: center;
  color: #fff;
}
.tb-files { margin: 0 29px 0 31px; }
.winpe {
  margin-left: 503px;
  font: 600 24.500px/26px "Open Sans", sans-serif;
  color: #4a6a9f;
  padding-top: 12px;
}
.tray { margin-left: auto; display: flex; align-items: center; gap: 7px; }
.lang { font-size: 17px; margin-left: -3px; }
.ime { width: 14px; height: 15px; margin-left: 7px; background: #fff; color: #111; font-size: 12px; line-height: 14px; text-align: center; }
.tray time { margin-left: 6px; width: 68px; line-height: 19px; text-align: center; font-size: 12.200px; }
.tray svg { position: relative; left: -5px; }
.lang { position: relative; left: -2px; }

/* Start menu */
.start {
  position: absolute;
  left: 21px;
  top: 341px;
  width: 250px;
  height: 390px;
  background: #fff;
  display: flex;
  flex-direction: column;
}
.list { background: #fff; overflow: hidden; }
.list li { display: flex; align-items: center; gap: 4px; height: 32px; padding-left: 19px; white-space: nowrap; }
.list li svg { width: 24px; height: 24px; }
.list .keys { letter-spacing: .25px; }
.main-list { height: 309px; padding-top: 2px; }
.main-list li { padding-left: 3px; }
.back {
  margin: 5px 9px 0;
  height: 31px;
  display: flex;
  align-items: center;
  gap: 23px;
  padding-left: 2px;
  border-top: 1px solid #d4d4d4;
  color: #222;
}
.search {
  flex: 1;
  padding: 11px 16px 0 12px;
  background: #f4f4f4;
  border-top: 1px solid #d9d9d9;
}
.field {
  display: flex;
  align-items: center;
  justify-content: space-between;
  height: 22px;
  padding: 0 5px 0 6px;
  border: 1px solid #ccc;
  background: #fff;
  color: #666;
}
.field span { border-left: 1px solid #000; line-height: 17px; padding-left: 3px; }
.power {
  position: absolute;
  left: 278px;
  top: 697px;
  display: flex;
  width: 85px;
  height: 24px;
  border: 1px solid #a9c1e6;
  color: #fff;
}
.power span { display: flex; align-items: center; gap: 5px; width: 60px; padding-left: 7px; }
.power .more { width: 23px; border-left: 1px solid #a9c1e6; }

/* Unfolded submenu strips */
.strips { position: absolute; left: 106px; top: 76px; display: flex; height: 574px; }
.gutter { flex: none; width: 12px; background: linear-gradient(90deg, #fff 10%, #eee 45%, #aaa); }
.slice {
  position: relative;
  flex: none;
  display: flex;
  padding: 9px 0 0 9px;
  overflow: hidden;
  background: linear-gradient(#3f66ae 386px, #1f4584 388px 446px, #3f66ae 448px 533px, #1c417e 536px);
}
.slice .list { position: relative; flex: 1; padding-top: 2px; }
.slice .head { padding-left: 6px; gap: 9px; }
.slice .head svg { width: 16px; }
.slice .closed { padding-left: 3px; }
.s1 { width: 182px; }
.s2 { width: 192px; }
.s3 { width: 167px; }
.s4 { width: 159px; }
.s5 { width: 158px; }
.s6 { width: 259px; }
.ghost { position: absolute; left: 19px; top: -5px; display: flex; gap: 39px; }
.letters { position: absolute; left: 3px; top: 94px; display: flex; flex-direction: column; gap: 83px; }
.scroll {
  position: relative;
  width: 15px;
  height: 544px;
  margin-top: 2px;
  padding: 6px 0;
  background: #f0f0f0;
  display: flex;
  flex-direction: column;
  align-items: center;
  justify-content: space-between;
}
.s6::before { content: ""; position: absolute; left: 9px; right: 0; top: 9px; bottom: 0; background: #fff; }
.thumb { width: 13px; height: 282px; margin-top: 232px; background: #cdcdcd; }

.places {
  position: relative;
  flex: none;
  width: 103px;
  padding: 6px 0 0 9px;
  overflow: hidden;
  color: #fff;
}
.places-bg { position: absolute; left: 0; top: 0; width: 103px; height: 574px; }
.places a {
  position: relative;
  display: flex;
  align-items: center;
  gap: 6px;
  height: 42px;
  white-space: nowrap;
}
.places a:nth-of-type(-n+2) { border-bottom: 1px solid #3a5d9e; }
.places a svg { width: 16px; height: 16px; }
.places a:last-child { height: 38px; }
```
